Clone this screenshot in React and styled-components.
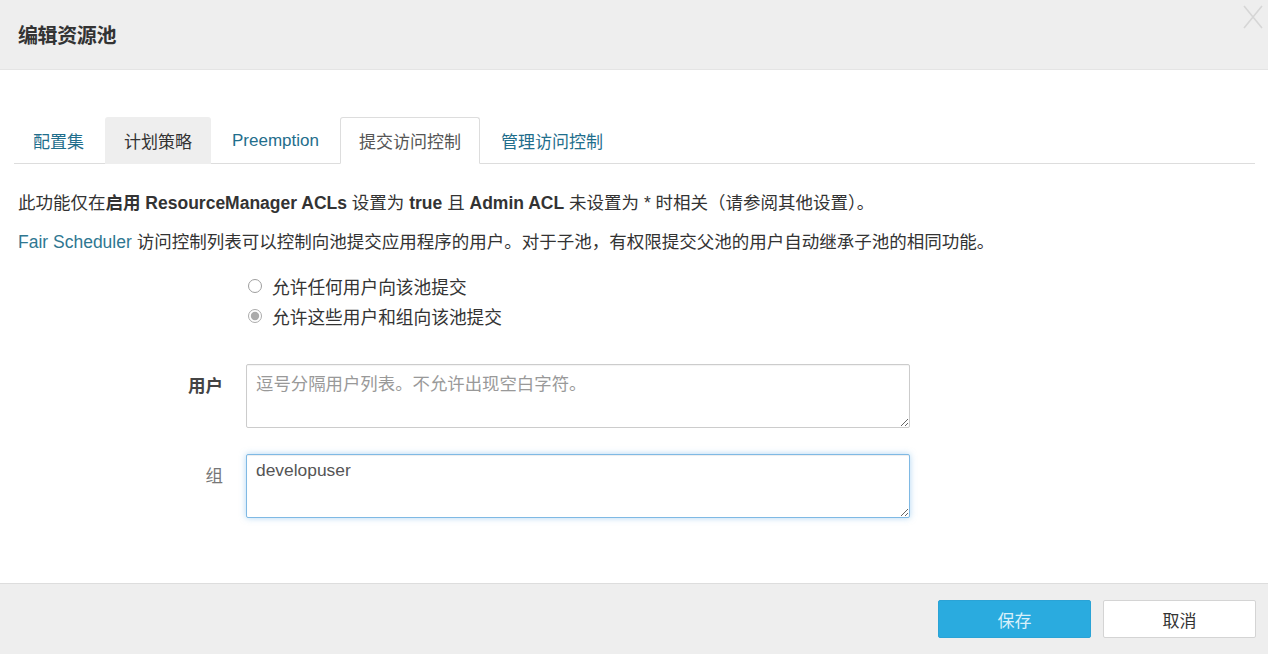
import React, { useState } from 'react'
import styled, { createGlobalStyle } from 'styled-components'

const GlobalStyle = createGlobalStyle`
   html, body {
      margin: 0;
      padding: 0;
      background: #fff;
   }
   body {
      font-family: "Liberation Sans", "Noto Sans CJK SC", sans-serif;
      color: #333;
   }
`

const tabs = ['配置集', '计划策略', 'Preemption', '提交访问控制', '管理访问控制']

function App() {
   const [active, setActive] = useState(3)
   const [mode, setMode] = useState('some')
   return (
      <>
         <GlobalStyle />
         <Modal>
            <Header>
               <Title>编辑资源池</Title>
               <Close aria-label="close">
                  <svg width="22" height="26" viewBox="0 0 22 26">
                     <path d="M2 2 L20 24 M20 2 L2 24" stroke="#d6d6d6" strokeWidth="1.6" fill="none" />
                  </svg>
               </Close>
            </Header>
            <Body>
               <TabBar>
                  {tabs.map((t, i) => (
                     <Tab
                        key={t}
                        $active={i === active}
                        $hover={i === 1}
                        onClick={() => setActive(i)}
                     >
                        {t}
                     </Tab>
                  ))}
               </TabBar>
               <Note>
                  此功能仅在<b>启用 ResourceManager ACLs</b> 设置为 <b>true</b> 且 <b>Admin ACL</b> 未设置为 * 时相关（请参阅其他设置）。
               </Note>
               <Note>
                  <Link>Fair Scheduler</Link> 访问控制列表可以控制向池提交应用程序的用户。对于子池，有权限提交父池的用户自动继承子池的相同功能。
               </Note>
               <Radios>
                  <RadioRow>
                     <Radio
                        type="radio"
                        name="mode"
                        checked={mode === 'any'}
                        onChange={() => setMode('any')}
                     />
                     允许任何用户向该池提交
                  </RadioRow>
                  <RadioRow>
                     <Radio
                        type="radio"
                        name="mode"
                        checked={mode === 'some'}
                        onChange={() => setMode('some')}
                     />
                     允许这些用户和组向该池提交
                  </RadioRow>
               </Radios>
               <Fields>
                  <Field>
                     <Label $bold>用户</Label>
                     <TextArea placeholder="逗号分隔用户列表。不允许出现空白字符。" />
                  </Field>
                  <Field>
                     <Label>组</Label>
                     <TextArea $focus defaultValue="developuser" />
                  </Field>
               </Fields>
            </Body>
            <Footer>
               <Button $primary>保存</Button>
               <Button>取消</Button>
            </Footer>
         </Modal>
      </>
   )
}

export default App

const Modal = styled.div`
   width: 1268px;
   height: 654px;
   display: flex;
   flex-direction: column;
   background: #fff;
   overflow: hidden;
`
const Header = styled.div`
   position: relative;
   height: 70px;
   display: flex;
   align-items: center;
   padding: 0 18px;
   background: #eeeeee;
   border-bottom: 1px solid #e4e4e4;
   box-sizing: border-box;
`
const Title = styled.h4`
   margin: 0;
   font-size: 20px;
   font-weight: bold;
   color: #333;
   letter-spacing: -0.4px;
`
const Close = styled.span`
   position: absolute;
   top: 4px;
   right: 4px;
   display: flex;
`
const Body = styled.div`
   flex: 1;
   padding: 47px 13px 0 14px;
`
const TabBar = styled.div`
   display: flex;
   gap: 2px;
   height: 47px;
   border-bottom: 1px solid #dddddd;
   box-sizing: border-box;
`
const Tab = styled.div`
   display: flex;
   align-items: center;
   padding: 0 18px;
   font-size: 17px;
   cursor: pointer;
   box-sizing: border-box;
   color: ${({ $active, $hover }) => ($active ? '#555' : $hover ? '#333' : '#1f6e8c')};
   background: ${({ $active, $hover }) => ($active ? '#fff' : $hover ? '#eeeeee' : 'transparent')};
   border: 1px solid ${({ $active }) => ($active ? '#dddddd' : 'transparent')};
   border-bottom-color: ${({ $active }) => ($active ? '#fff' : 'transparent')};
   border-radius: 3px 3px 0 0;
   margin-bottom: -1px;
`
const Note = styled.p`
   margin: 0;
   padding-left: 4px;
   font-size: 17.5px;
   line-height: 39px;
   color: #333;
   &:first-of-type {
      margin-top: 20px;
   }
   b {
      font-weight: bold;
   }
`
const Link = styled.span`
   color: #2f7791;
`
const Radios = styled.div`
   display: flex;
   flex-direction: column;
   padding-left: 234px;
   margin-top: 9px;
`
const RadioRow = styled.label`
   display: flex;
   align-items: center;
   gap: 10px;
   height: 30px;
   font-size: 17.7px;
   color: #333;
`
const Radio = styled.input`
   width: 14px;
   height: 14px;
   margin: 0;
   accent-color: #888;
   opacity: 0.7;
`
const Fields = styled.div`
   display: flex;
   flex-direction: column;
   gap: 26px;
   margin-top: 33px;
`
const Field = styled.div`
   display: flex;
   align-items: flex-start;
   gap: 23px;
`
const Label = styled.div`
   width: 209px;
   text-align: right;
   font-size: 17.5px;
   padding-top: 8px;
   font-weight: ${({ $bold }) => ($bold ? 'bold' : 'normal')};
   color: ${({ $bold }) => ($bold ? '#444' : '#777')};
`
const TextArea = styled.textarea`
   width: 664px;
   height: 64px;
   box-sizing: border-box;
   padding: 5px 9px;
   font-family: "Liberation Sans", "Noto Sans CJK SC", sans-serif;
   font-size: 17.4px;
   color: #555;
   border-radius: 2px;
   outline: none;
   resize: vertical;
   border: 1px solid ${({ $focus }) => ($focus ? '#7fb9e4' : '#cccccc')};
   box-shadow: ${({ $focus }) =>
      $focus ? 'inset 0 1px 1px rgba(0,0,0,.075), 0 0 6px rgba(102,175,233,.5)' : 'inset 0 1px 1px rgba(0,0,0,.05)'};
   &::placeholder {
      color: #999;
   }
`
const Footer = styled.div`
   height: 71px;
   display: flex;
   align-items: center;
   justify-content: flex-end;
   gap: 12px;
   padding: 0 12px 0 0;
   background: #eeeeee;
   border-top: 1px solid #dddddd;
   box-sizing: border-box;
`
const Button = styled.button`
   width: 153px;
   height: 38px;
   font-family: "Liberation Sans", "Noto Sans CJK SC", sans-serif;
   font-size: 17px;
   border-radius: 2px;
   cursor: pointer;
   background: ${({ $primary }) => ($primary ? '#2aabdf' : '#fff')};
   color: ${({ $primary }) => ($primary ? '#d8f0fa' : '#333')};
   border: 1px solid ${({ $primary }) => ($primary ? '#2aa3d6' : '#d4d4d4')};
`
